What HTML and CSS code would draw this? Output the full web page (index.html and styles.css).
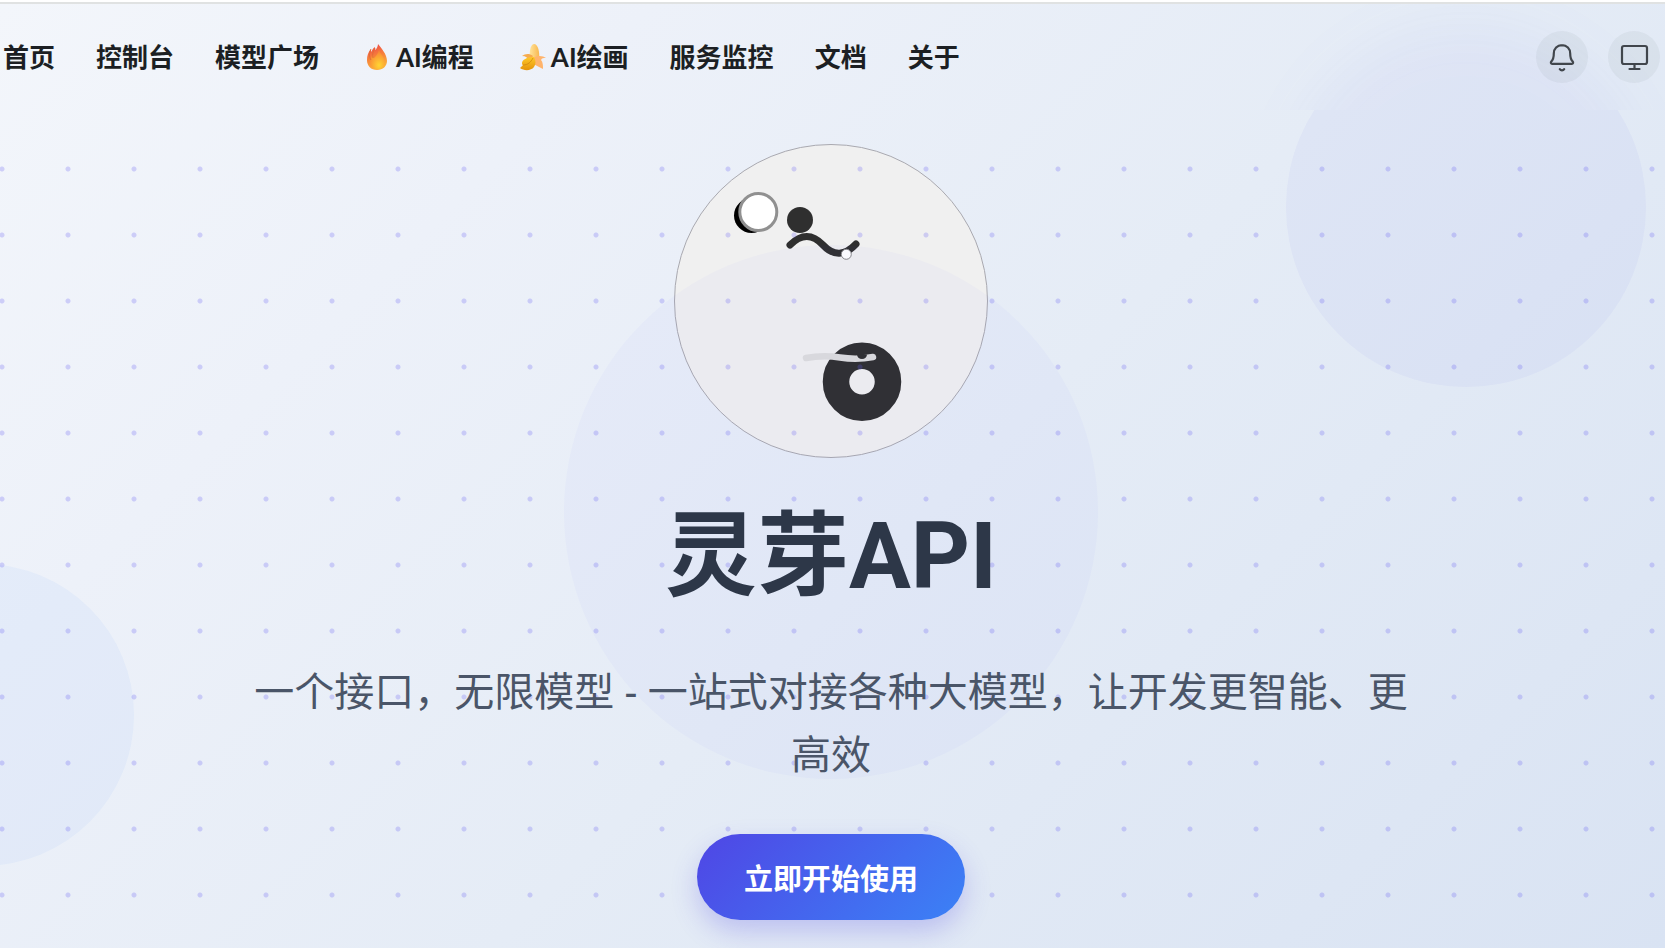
FILE: index.html
```
<!DOCTYPE html>
<html lang="zh-CN">
<head>
  <meta charset="UTF-8">
  <meta name="viewport" content="width=device-width, initial-scale=1">
  <title>灵芽API</title>
  <link rel="stylesheet" href="styles.css">
</head>
<body>
  <div class="page">
    <header class="header">
      <span class="blob blob-header" aria-hidden="true"></span>
      <nav class="nav">
        <a href="#">首页</a>
        <a href="#">控制台</a>
        <a href="#">模型广场</a>
        <a href="#">
          <svg class="nav-icon" viewBox="0 0 36 28" aria-hidden="true">
            <defs>
              <linearGradient id="flame" x1="0" y1="0" x2="0.3" y2="1">
                <stop offset="0" stop-color="#ee3f4e"/>
                <stop offset="0.55" stop-color="#f6803a"/>
                <stop offset="1" stop-color="#fbb13c"/>
              </linearGradient>
              <radialGradient id="flameCore" cx="0.6" cy="0.8" r="0.7">
                <stop offset="0" stop-color="#ffd533"/>
                <stop offset="1" stop-color="#f98a35"/>
              </radialGradient>
            </defs>
            <path fill="url(#flame)" d="M18 1c3 4 9 10 9 17 0 5-4 9-10 9S7 23 7 17c0-4 1-8 4-11 0 1 0 2 .5 3C12 7 13 5 15 4c0 1 0 2 .5 3C17 5 18 3 18 1z"/>
            <path fill="url(#flameCore)" d="M19 7c1 4 6 7 6 13 0 4-3 6-7 6-5 0-8-3-8-7 0-3 1-5 3-7 0 2 .5 3 1 3 2-2 4-4 5-8z"/>
            <path fill="none" stroke="#d96b35" stroke-width="0.8" d="M11 6c-2 4-2 8 0 11M15 5c-2 3-3 7-2 10"/>
          </svg>AI编程
        </a>
        <a href="#">
          <svg class="nav-icon" viewBox="0 0 36 28" aria-hidden="true">
            <defs>
              <linearGradient id="peel" x1="0" y1="0" x2="0" y2="1">
                <stop offset="0" stop-color="#ffc928"/>
                <stop offset="1" stop-color="#e5940b"/>
              </linearGradient>
              <linearGradient id="fruit" x1="0" y1="0" x2="1" y2="0">
                <stop offset="0" stop-color="#ffe49b"/>
                <stop offset="1" stop-color="#f8b74f"/>
              </linearGradient>
            </defs>
            <path fill="url(#fruit)" d="M15 17C14 11 15 1 19 1s6 8 5 16l-3 5z"/>
            <path fill="#f6ab4e" d="M18 13c-4-3-8-2-11 0 4 0 6 2 8 5z"/>
            <path fill="#ffb46c" d="M18 15c5-3 10-2 13 0-3 0-4 0-5 2 2 2 2 6 2 9-4-2-8-4-11-6z"/>
            <path fill="url(#peel)" d="M18 14c-6 0-11 3-11 6 0 1 0 2 1 2l-3 3c4 3 11 3 14-1 2-3 2-6 0-10z"/>
            <path fill="none" stroke="#cf8610" stroke-width="0.8" d="M8 22c5 0 8-3 10-7"/>
          </svg>AI绘画
        </a>
        <a href="#">服务监控</a>
        <a href="#">文档</a>
        <a href="#">关于</a>
      </nav>
      <div class="actions">
        <button type="button" class="icon-btn" aria-label="通知">
          <svg viewBox="0 0 52 52" aria-hidden="true">
            <path d="M26 14.200c-4.800 0-8.200 3.600-8.200 8.300 0 4.600-.8 6.300-2.500 8.100-.9 1-.3 2.200.8 2.200h19.800c1.100 0 1.700-1.200.8-2.200-1.700-1.800-2.500-3.500-2.500-8.100 0-4.700-3.400-8.300-8.200-8.300z"/>
            <path d="M23.800 38.200c1 1.600 3.400 1.600 4.400 0"/>
          </svg>
        </button>
        <button type="button" class="icon-btn" aria-label="切换主题">
          <svg viewBox="0 0 52 52" aria-hidden="true">
            <rect x="14" y="15" width="25" height="18" rx="2"/>
            <path d="M26.500 33v5M21.500 38h10"/>
          </svg>
        </button>
      </div>
    </header>

    <main class="hero">
      <svg class="avatar" viewBox="0 0 316 316" role="img" aria-label="灵芽API">
        <circle cx="158" cy="158" r="156.500" fill="#f0f0f0" stroke="#a9a9b0" stroke-width="1"/>
        <circle cx="78.500" cy="72.500" r="17.500" fill="#000"/>
        <circle cx="85.300" cy="69" r="18.500" fill="#fff" stroke="#909090" stroke-width="3"/>
        <circle cx="127" cy="77" r="13" fill="#2f2f2f"/>
        <path d="M117 102Q134 85 150 102T183 101" fill="none" stroke="#2f2f2f" stroke-width="7" stroke-linecap="round"/>
        <circle cx="173.300" cy="111.300" r="5" fill="#fff" stroke="#888" stroke-width="1"/>
        <circle cx="189" cy="238.700" r="26" fill="none" stroke="#2f2f2f" stroke-width="26.500"/>
        <path d="M133 215Q150 212 167 214.500T200 214" fill="none" stroke="#dcdcdc" stroke-width="6.500" stroke-linecap="round"/>
        <path d="M184 211.500h10a5 4.500 0 0 1-10 0z" fill="#2f2f2f"/>
      </svg>
      <div class="decor" aria-hidden="true">
        <span class="blob blob-right"></span>
        <span class="blob blob-left"></span>
        <span class="blob blob-center"></span>
        <span class="dots"></span>
      </div>
      <h1 class="title">灵芽API</h1>
      <p class="subtitle">一个接口，无限模型 - 一站式对接各种大模型，让开发更智能、更高效</p>
      <button type="button" class="start-btn">立即开始使用</button>
    </main>
  </div>
</body>
</html>
```

FILE: styles.css
```
* {
  box-sizing: border-box;
}

body {
  margin: 0;
  padding-top: 2px;
  background: #fff;
  font-family: "Noto Sans", "Noto Sans CJK SC", sans-serif;
  color: #1c1f23;
}

.page {
  display: flex;
  flex-direction: column;
  min-height: calc(100vh - 2px);
  border-top: 2px solid #e0e2e2;
  background: linear-gradient(135deg, #f3f6fb 0%, #edf1f9 25%, #e5ecf6 55%, #d9e3f3 100%);
}

/* header */
.header {
  position: relative;
  display: flex;
  align-items: center;
  justify-content: space-between;
  height: 106px;
  padding: 0 5px 0 3px;
  overflow: hidden;
}

.nav {
  position: relative;
  display: flex;
  align-items: center;
  gap: 41px;
}

.nav a {
  display: flex;
  align-items: center;
  color: #1c1f23;
  font-family: Lato, "Noto Sans CJK SC", sans-serif;
  font-size: 26px;
  font-weight: 700;
  line-height: 40px;
  text-decoration: none;
  white-space: nowrap;
}

.nav-icon {
  width: 36px;
  height: 28px;
}

.actions {
  position: relative;
  display: flex;
  gap: 20px;
}

.icon-btn {
  width: 52px;
  height: 52px;
  padding: 0;
  border: none;
  border-radius: 50%;
  background: rgba(46, 50, 56, 0.05);
  cursor: pointer;
}

.icon-btn svg {
  display: block;
  width: 52px;
  height: 52px;
  fill: none;
  stroke: #41464c;
  stroke-width: 2.2;
  stroke-linecap: round;
  stroke-linejoin: round;
}

/* hero */
.hero {
  position: relative;
  flex: 1;
  display: flex;
  flex-direction: column;
  align-items: center;
  padding: 33px 43px 28px 40px;
  overflow: hidden;
}

.avatar {
  width: 316px;
  height: 316px;
}

.decor,
.dots {
  position: absolute;
  inset: 0;
}

.dots {
  background-image: radial-gradient(circle, rgba(99, 91, 241, 0.25) 2px, transparent 3px);
  background-size: 66px 66px;
  background-position: -31px 26px;
}

.blob {
  position: absolute;
  border-radius: 50%;
}

.blob-header,
.blob-right {
  right: 19px;
  width: 360px;
  height: 360px;
  background: rgba(99, 91, 241, 0.05);
}

/* continues the right blob behind the header, out of focus */
.blob-header {
  top: 23px;
  filter: blur(28px);
}

.blob-right {
  top: -83px;
}

.blob-left {
  top: 454px;
  left: -168px;
  width: 302px;
  height: 302px;
  background: rgba(59, 130, 246, 0.05);
}

.blob-center {
  top: 135px;
  left: calc(50% - 269px);
  width: 534px;
  height: 534px;
  background: rgba(99, 91, 241, 0.03);
}

.title,
.subtitle,
.start-btn {
  position: relative;
}

.title {
  margin: 36px 0 0;
  color: #2d3748;
  font-family: Roboto, "Noto Sans CJK SC", sans-serif;
  font-size: 92px;
  font-weight: 700;
  line-height: 124px;
}

.subtitle {
  max-width: 1180px;
  margin: 40px 0 0;
  color: #4a5568;
  font-size: 40px;
  line-height: 63px;
  text-align: center;
}

.start-btn {
  margin-top: 49px;
  padding: 0 47px;
  height: 86px;
  border: none;
  border-radius: 43px;
  background: linear-gradient(135deg, #4f46e5, #3b82f6);
  box-shadow: 0 12px 26px rgba(79, 70, 229, 0.25);
  color: #fff;
  font-family: inherit;
  font-size: 29px;
  font-weight: 700;
  cursor: pointer;
}
```
